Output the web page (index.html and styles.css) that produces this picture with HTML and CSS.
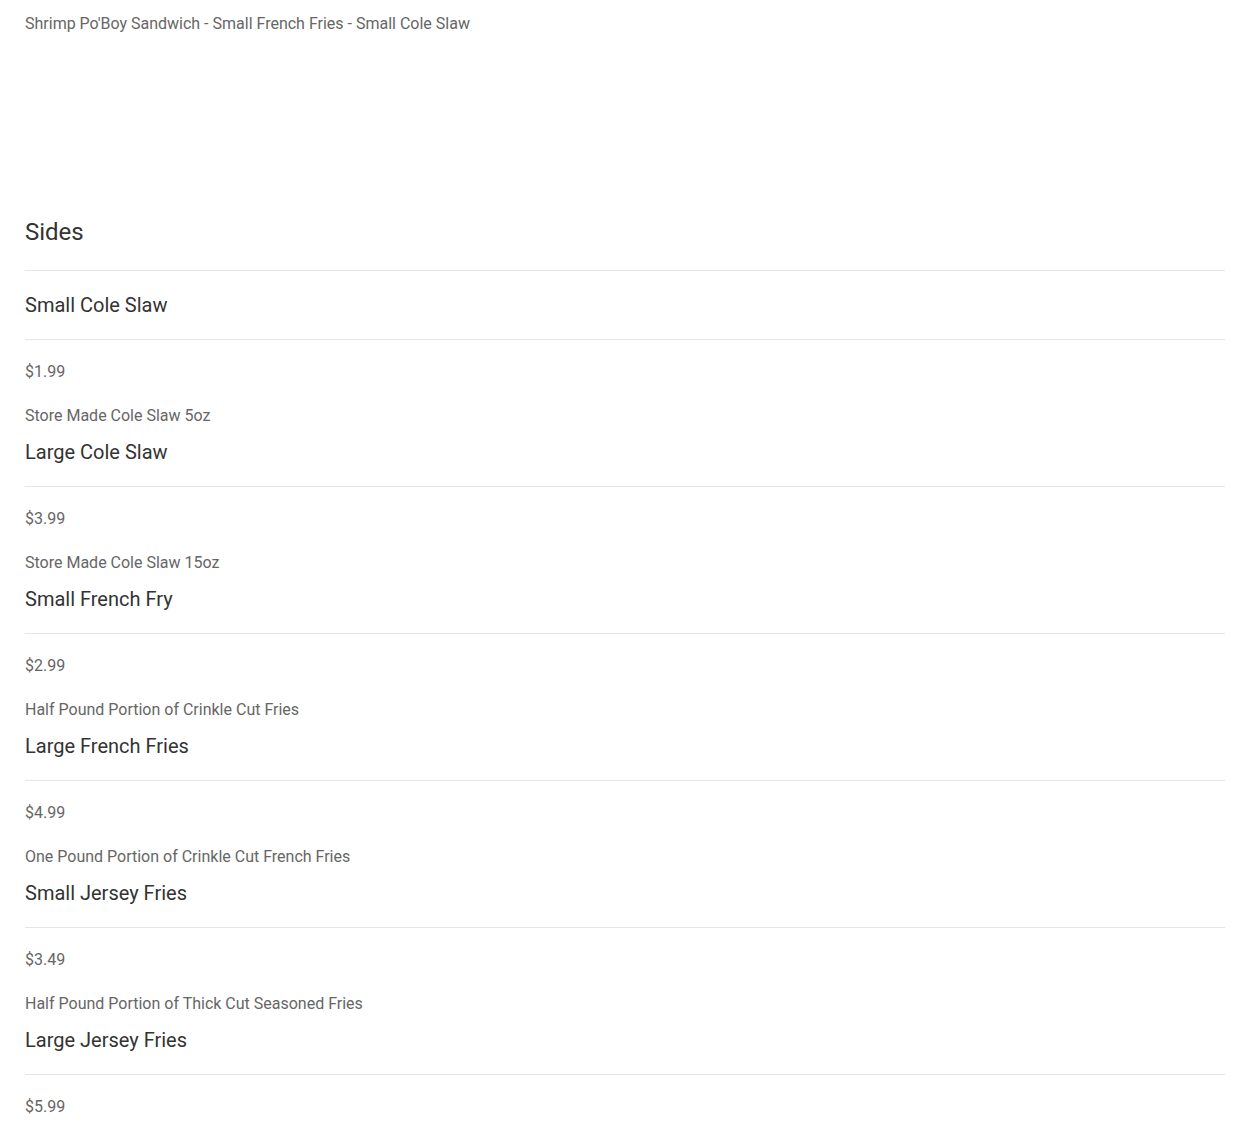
FILE: index.html
```html
<!DOCTYPE html>
<html lang="en">
<head>
    <meta charset="UTF-8">
    <meta name="viewport" content="width=device-width, initial-scale=1.0">
    <title>Menu - Sides</title>
    <link rel="stylesheet" href="styles.css">
</head>
<body>
    <div class="container">
        <p class="combo-desc">Shrimp Po'Boy Sandwich - Small French Fries - Small Cole Slaw</p>

        <div class="section">
            <h2 class="section-title">Sides</h2>

            <div class="menu-list">
                <div class="menu-item">
                    <h3 class="item-name">Small Cole Slaw</h3>
                    <div class="item-price">$1.99</div>
                    <p class="item-desc">Store Made Cole Slaw 5oz</p>
                </div>

                <div class="menu-item">
                    <h3 class="item-name">Large Cole Slaw</h3>
                    <div class="item-price">$3.99</div>
                    <p class="item-desc">Store Made Cole Slaw 15oz</p>
                </div>

                <div class="menu-item">
                    <h3 class="item-name">Small French Fry</h3>
                    <div class="item-price">$2.99</div>
                    <p class="item-desc">Half Pound Portion of Crinkle Cut Fries</p>
                </div>

                <div class="menu-item">
                    <h3 class="item-name">Large French Fries</h3>
                    <div class="item-price">$4.99</div>
                    <p class="item-desc">One Pound Portion of Crinkle Cut French Fries</p>
                </div>

                <div class="menu-item">
                    <h3 class="item-name">Small Jersey Fries</h3>
                    <div class="item-price">$3.49</div>
                    <p class="item-desc">Half Pound Portion of Thick Cut Seasoned Fries</p>
                </div>

                <div class="menu-item">
                    <h3 class="item-name">Large Jersey Fries</h3>
                    <div class="item-price">$5.99</div>
                    <p class="item-desc">One Pound Portion of Thick Cut Seasoned Fries</p>
                </div>
            </div>
        </div>
    </div>
</body>
</html>
```

FILE: styles.css
```css
* {
    margin: 0;
    padding: 0;
    box-sizing: border-box;
}

body {
    background: #fff;
    color: #333;
    font-family: Roboto, 'Liberation Sans', sans-serif;
}

.container {
    padding: 12px 25px 0;
}

.combo-desc {
    font-size: 16px;
    line-height: 24px;
    color: #666;
}

.section {
    margin-top: 180px;
}

.section-title {
    font-size: 24px;
    font-weight: 400;
    line-height: 32px;
    color: #333;
    padding-bottom: 22px;
    border-bottom: 1px solid #e6e6e6;
}

.menu-list {
    margin-top: 9px;
}

.item-name {
    font-size: 20px;
    font-weight: 400;
    line-height: 28px;
    color: #333;
    padding: 11px 0 20px;
    border-bottom: 1px solid #e6e6e6;
}

.item-price {
    margin-top: 21px;
    font-size: 16px;
    line-height: 22px;
    color: #666;
}

.item-desc {
    margin-top: 22px;
    font-size: 16px;
    line-height: 22px;
    color: #666;
}
```
